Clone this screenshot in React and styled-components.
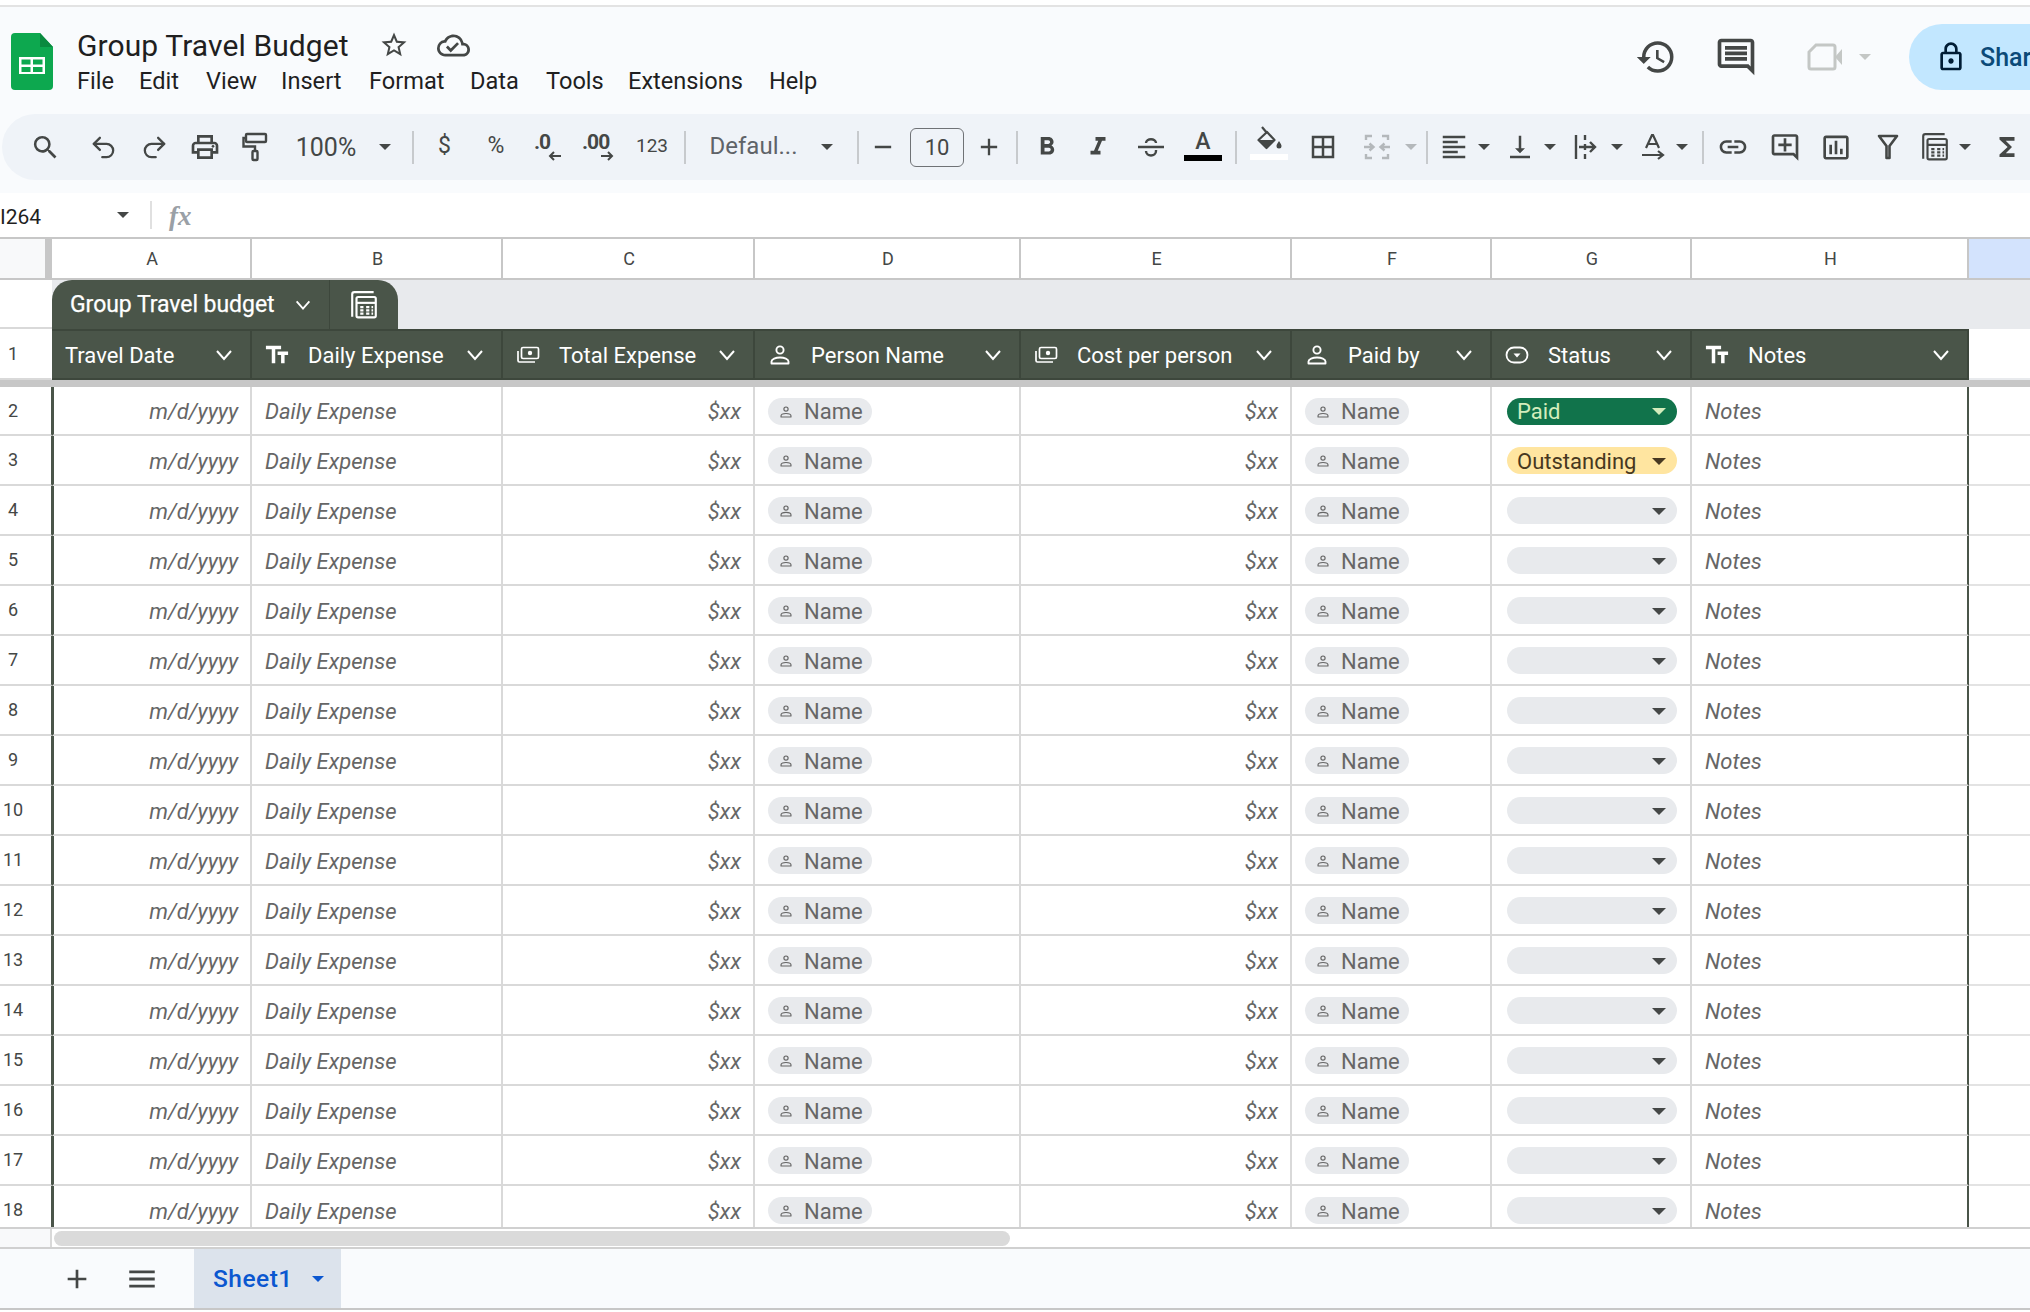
import React from 'react'
import styled, { createGlobalStyle } from 'styled-components'
import {
  MdSearch, MdOutlinePrint, MdFormatBold, MdFormatItalic,
  MdBorderAll, MdFormatAlignLeft, MdVerticalAlignBottom, MdLink, MdOutlineAddComment, MdInsertChartOutlined,
  MdFunctions, MdHistory, MdOutlineComment, MdOutlineLock, MdStarBorder, MdOutlineCloudDone, MdTextFields,
  MdAdd, MdRemove, MdMenu,
} from 'react-icons/md'
import { Undo2, Redo2 } from 'lucide-react'

const GRID = '52px 200px 251px 252px 266px 271px 200px 200px 277px 1fr'
const DARK = '#4a5549'
const INK = '#444746'

const GlobalStyle = createGlobalStyle`
  html, body { margin: 0; padding: 0; background: #fff; }
  * { box-sizing: border-box; }
  body { font-family: Roboto, "Liberation Sans", sans-serif; }
`

const Page = styled.div`
  width: 2030px;
  height: 1312px;
  overflow: hidden;
  display: flex;
  flex-direction: column;
  background: #fff;
  padding-top: 5px;
`

const Header = styled.header`
  height: 188px;
  background: #f9fbfd;
  border-top: 2px solid #e3e3e3;
  flex: none;
`
const TitleBar = styled.div`
  height: 107px;
  display: flex;
  align-items: flex-start;
`
const Logo = styled.svg`
  width: 42px;
  height: 57px;
  margin: 26px 24px 0 11px;
  flex: none;
`
const TitleBlock = styled.div`
  padding-top: 20px;
  display: flex;
  flex-direction: column;
`
const TitleLine = styled.div`
  height: 36px;
  display: flex;
  align-items: center;
  color: #1f1f1f;
`
const DocName = styled.span`
  font-size: 30px;
  letter-spacing: 0.1px;
  width: 302px;
`
const Menu = styled.nav`
  height: 36px;
  display: flex;
  align-items: center;
  font-size: 23.6px;
  color: #1f1f1f;
`
const MenuItem = styled.span`
  width: ${p => p.$w}px;
  flex: none;
`
const Actions = styled.div`
  margin-left: auto;
  margin-right: -40px;
  margin-top: 17px;
  height: 66px;
  display: flex;
  align-items: center;
  color: ${INK};
`
const ShareButton = styled.div`
  width: 161px;
  height: 66px;
  margin-left: 38px;
  border-radius: 33px;
  background: #c2e7ff;
  display: flex;
  align-items: center;
  padding-left: 26px;
  gap: 13px;
  font-size: 25px;
  font-weight: 500;
  color: #0b4a78;
  overflow: hidden;
  white-space: nowrap;
  svg { color: #001d35; flex: none; }
`
const CameraSlot = styled.span`
  margin-left: 49px;
  display: flex;
`
const CameraCaret = styled.span`
  margin-left: 16px;
`

const ToolbarPill = styled.div`
  height: 66px;
  margin-left: 2px;
  border-radius: 33px 0 0 33px;
  background: #eff3f8;
  display: flex;
  align-items: center;
  color: ${INK};
  overflow: hidden;
`
const ToolSlot = styled.div`
  width: ${p => p.$w}px;
  margin-left: ${p => p.$ml}px;
  flex: none;
  height: 40px;
  padding-bottom: ${p => p.$up || 0}px;
  display: flex;
  align-items: center;
  justify-content: center;
  position: relative;
  font-size: ${p => p.$fs || 22}px;
  color: ${p => p.$c || INK};
  white-space: nowrap;
`
const Sep = styled.div`
  width: 2px;
  height: 33px;
  background: #c7cacd;
`
const Caret = styled.i`
  display: block;
  width: 0;
  height: 0;
  border-left: ${p => p.$s || 6}px solid transparent;
  border-right: ${p => p.$s || 6}px solid transparent;
  border-top: ${p => p.$s || 6}px solid ${p => p.$c || INK};
  flex: none;
  ${p => p.$end && 'margin-left: auto;'}
`
const SizeBox = styled.div`
  width: 54px;
  height: 39px;
  border: 1.5px solid #6f7276;
  border-radius: 6px;
  display: flex;
  align-items: center;
  justify-content: center;
  font-size: 22px;
`
const ColorGlyph = styled.div`
  display: flex;
  flex-direction: column;
  align-items: center;
  width: 38px;
  height: 40px;
  padding-top: 2px;
  line-height: 26px;
  font-size: 23px;
  font-weight: 500;
`
const Swatch = styled.div`
  width: 38px;
  height: 6px;
  margin-top: ${p => p.$top || 0}px;
  background: ${p => p.$c};
  flex: none;
`
const DecimalGlyph = styled.div`
  display: flex;
  flex-direction: column;
  align-items: flex-end;
  width: 100%;
  font-size: 21px;
  font-weight: 700;
  line-height: 18px;
  letter-spacing: -1px;
  div { align-self: flex-start; }
`

const FormulaBar = styled.div`
  height: 46px;
  flex: none;
  display: flex;
  align-items: center;
  border-bottom: 2px solid #c7c7c7;
  color: #1f1f1f;
`
const CellName = styled.span`
  width: 117px;
  font-size: 21px;
  padding-top: 3px;
`
const FormulaSep = styled.div`
  width: 2px;
  height: 28px;
  background: #e0e0e0;
  margin: 0 17px 0 21px;
`
const Fx = styled.span`
  font-family: "Liberation Serif", serif;
  font-style: italic;
  font-size: 27px;
  color: #9aa0a6;
  font-weight: 700;
  padding-top: 2px;
`

const Row = styled.div`
  display: grid;
  grid-template-columns: ${GRID};
  flex: none;
`
const ColumnHeads = styled(Row)`
  height: 41px;
  border-bottom: 2px solid #c7c7c7;
`
const Corner = styled.div`
  background: #f8f9fa;
  border-right: 7px solid #c7c7c7;
`
const ColumnHead = styled.div`
  display: flex;
  align-items: center;
  justify-content: center;
  padding-left: 2px;
  font-size: 18px;
  color: ${INK};
  border-right: 2px solid #c7c7c7;
  background: ${p => (p.$selected ? '#d3e3fd' : '#fff')};
  ${p => p.$selected && 'border-right: 0;'}
`
const TableBand = styled.div`
  height: 49px;
  flex: none;
  display: flex;
  align-items: stretch;
  background: #e8eaed;
`
const BandGutter = styled.div`
  width: 52px;
  background: #fff;
  border-bottom: 2px solid #d9d9d9;
  flex: none;
`
const TableTab = styled.div`
  width: 346px;
  height: 49px;
  background: ${DARK};
  border-radius: 20px 20px 0 0;
  display: flex;
  color: #fff;
`
const TabTitle = styled.div`
  width: 278px;
  display: flex;
  align-items: center;
  padding-left: 18px;
  border-right: 1.5px solid #3d473c;
  font-size: 23px;
  letter-spacing: -0.05px;
  -webkit-text-stroke: 0.25px #fff;
  gap: 18px;
  white-space: nowrap;
  svg { flex: none; }
`
const TabIcon = styled.div`
  flex: 1;
  display: flex;
  align-items: center;
  justify-content: center;
`
const HeaderRow = styled(Row)`
  height: 51px;
`
const Gutter = styled.div`
  display: flex;
  align-items: center;
  padding-left: ${p => (p.$two ? 3 : 8)}px;
  font-size: 18px;
  color: ${INK};
  border-right: 1px solid ${p => (p.$data ? DARK : 'transparent')};
  border-bottom: 2px solid #d9d9d9;
  padding-bottom: 1px;
`
const HeaderCell = styled.div`
  display: flex;
  align-items: center;
  padding: 1px 15px 0 13px;
  background: ${DARK};
  color: #fff;
  font-size: 22px;
  border: 2px solid #3d473c;
  border-left-width: 0;
  span { margin-left: ${p => (p.$plain ? 0 : 19)}px; white-space: nowrap; }
  svg { flex: none; }
`
const TextIcon = styled.i`
  width: 24px;
  display: flex;
  justify-content: center;
  svg { margin: 0 -2px; }
`
const Chevron = styled.svg`
  margin-left: auto;
  width: 22px;
  height: 22px;
`
const HeaderRest = styled.div`
  background: #fff;
  border-bottom: 2px solid #e8eaed;
`
const FreezeBar = styled.div`
  height: 7px;
  background: #c7c7c7;
  flex: none;
`
const Body = styled.div`
  height: 840px;
  overflow: hidden;
  flex: none;
`
const DataRow = styled(Row)`
  height: 50px;
  &:first-child { height: 49px; }
`
const Cell = styled.div`
  display: flex;
  align-items: center;
  justify-content: ${p => (p.$right ? 'flex-end' : 'flex-start')};
  padding: 2px ${p => (p.$right ? 12 : 13)}px 0 13px;
  font-size: 22px;
  font-style: italic;
  color: #666;
  border-bottom: 2px solid #d9d9d9;
  border-right: 2px solid ${p => (p.$edge ? DARK : '#d9d9d9')};
  ${p => p.$first && `border-left: 2px solid ${DARK};`}
`
const RestCell = styled.div`
  border-bottom: 2px solid #e3e3e3;
`
const NameChip = styled.div`
  width: 104px;
  height: 27px;
  margin-top: -1px;
  border-radius: 14px;
  background: #e8eaed;
  display: flex;
  align-items: center;
  padding: 1px 0 0 11px;
  gap: 11px;
  font-size: 22px;
  font-style: normal;
  color: #666;
`
const Status = styled.div`
  width: 170px;
  height: 27px;
  margin: -1px 0 0 2px;
  border-radius: 14px;
  background: ${p => p.$bg};
  color: ${p => p.$fg};
  display: flex;
  align-items: center;
  padding: 1px 11px 0 10px;
  font-size: 22px;
  font-style: normal;
`

const ScrollStrip = styled.div`
  flex: none;
  display: flex;
  border-top: 2px solid #d0d0d0;
  border-bottom: 2px solid #d0d0d0;
  box-sizing: content-box;
  height: 18px;
`
const ScrollCorner = styled.div`
  width: 52px;
  background: #f8f9fa;
  border-right: 2px solid #d9d9d9;
`
const ScrollThumb = styled.div`
  width: 956px;
  height: 15px;
  margin: 2px 0 0 2px;
  background: #dadada;
  border-radius: 8px;
`
const SheetBar = styled.footer`
  height: 61px;
  flex: none;
  background: #f9fbfd;
  border-bottom: 2px solid #c7c7c7;
  display: flex;
  align-items: stretch;
  color: ${INK};
`
const SheetIcon = styled.div`
  width: ${p => p.$w}px;
  margin-left: ${p => p.$ml}px;
  display: flex;
  align-items: center;
  justify-content: center;
`
const SheetTab = styled.div`
  width: 147px;
  margin-left: 32px;
  background: #dce3ec;
  display: flex;
  align-items: center;
  padding-left: 19px;
  gap: 19px;
  color: #0b57d0;
  font-size: 24.5px;
  font-weight: 500;
  letter-spacing: 0.5px;
`

const Money = ({ size = 24 }) => (
  <svg width={size} height={size} viewBox="0 0 24 24" fill="none" stroke="currentColor" strokeWidth="1.7">
    <rect x="5.5" y="4.5" width="17" height="11" rx="1.5" />
    <circle cx="14" cy="10" r="2.2" fill="currentColor" stroke="none" />
    <path d="M2 8v9.5a1.5 1.5 0 0 0 1.5 1.5H19" />
  </svg>
)
const Person = ({ size = 24, sw = 1.9 }) => (
  <svg width={size} height={size} viewBox="0 0 24 24" fill="none" stroke="currentColor" strokeWidth={sw}>
    <circle cx="12" cy="7" r="3.6" />
    <path d="M3.5 20.5v-2c0-2.5 4.2-4 8.5-4s8.5 1.500 8.500 4v2z" strokeLinejoin="round" />
  </svg>
)
const Dropdown = ({ size = 24 }) => (
  <svg width={size} height={size} viewBox="0 0 24 24" fill="none" stroke="currentColor" strokeWidth="1.8">
    <rect x="1.500" y="4.500" width="21" height="15" rx="7.500" />
    <path d="M8.500 10.500h7L12 14.500z" fill="currentColor" stroke="none" />
  </svg>
)
const Calc = ({ size = 30 }) => (
  <svg width={size} height={size} viewBox="0 0 28 28" fill="none" stroke="currentColor" strokeWidth="2">
    <path d="M3 25V4a2 2 0 0 1 2-2h18" />
    <rect x="7" y="6.500" width="18" height="19" rx="1.500" />
    <path d="M7 12h18" />
    <path d="M10.500 16h3M16 16h3M21 16h1.500M10.500 19h3M16 19h3M21 19h1.500M10.500 22h3M16 22h3M21 22h1.500" />
  </svg>
)
const Roller = () => (
  <svg width="26" height="30" viewBox="0 0 26 30" fill="none" stroke="currentColor" strokeWidth="2.400">
    <rect x="4" y="2" width="20" height="8" rx="1" />
    <path d="M4 6H1.500v8.500H13V19" />
    <rect x="10.500" y="19" width="5" height="9" rx="1" />
  </svg>
)
const Merge = () => (
  <svg width="28" height="26" viewBox="0 0 28 26" fill="none" stroke="#b4b8bb" strokeWidth="2.400">
    <path d="M3 6V2h6M19 2h6v4M3 20v4h6M19 24h6v-4M1 13h9M6.500 9.500 10.500 13l-4 3.500M27 13h-9M21.500 9.500 17.500 13l4 3.500" />
  </svg>
)
const Wrap = () => (
  <svg width="24" height="26" viewBox="0 0 24 26" fill="none" stroke="currentColor" strokeWidth="2.400">
    <path d="M2 1v24M11 1v5M11 10v6M11 20v5M5 13h16M16 8l5 5-5 5" />
  </svg>
)
const Rotate = () => (
  <svg width="24" height="26" viewBox="0 0 24 26" fill="none" stroke="currentColor" strokeWidth="2.200">
    <path d="M5 14 11 1h1l6 13M7.500 10h9M1 21h20M17 17l5 4-5 4" />
  </svg>
)
const Funnel = () => (
  <svg width="22" height="26" viewBox="0 0 22 26" fill="none" stroke="currentColor" strokeWidth="2.600">
    <path d="M2 2h18l-7.500 10v12h-3V12z" strokeLinejoin="round" />
  </svg>
)
const Strike = () => (
  <svg width="28" height="24" viewBox="0 0 28 24" fill="none" stroke="currentColor" strokeWidth="2.400">
    <path d="M1 12h26M9 8c0-5 10-5 10 0M9 16c0 6 10 6 10 0v-1" />
  </svg>
)
const Bucket = () => (
  <svg width="28" height="26" viewBox="0 0 28 26" fill="none" stroke="currentColor" strokeWidth="2.200" style={{ marginTop: -3 }}>
    <path d="M7 1l5 6" />
    <path d="M12 6 3.500 14l8 8 8-8z" strokeLinejoin="round" />
    <path d="M3.500 14h16l-8 8z" fill="currentColor" stroke="none" />
    <path d="M24 15c1.700 2.500 2.500 3.600 2.500 5a2.500 2.500 0 0 1-5 0c0-1.400.8-2.500 2.500-5z" fill="currentColor" stroke="none" />
  </svg>
)
const Camera = () => (
  <svg width="36" height="28" viewBox="0 0 36 28" fill="none">
    <path d="M9 2h17a2 2 0 0 1 2 2v20a2 2 0 0 1-2 2H4a2 2 0 0 1-2-2V9z" stroke="#c4c7c5" strokeWidth="3" />
    <path d="M28 14l7-8v16z" fill="#c4c7c5" />
  </svg>
)
const Arrow = ({ dir }) => (
  <svg width="14" height="10" viewBox="0 0 14 10" fill="none" stroke="currentColor" strokeWidth="2">
    {dir === 'left' ? <path d="M13 5H2M6 1 2 5l4 4" /> : <path d="M1 5h11M8 1l4 4-4 4" />}
  </svg>
)
const ChevronDown = () => (
  <Chevron viewBox="0 0 22 22" fill="none" stroke="#fff" strokeWidth="2">
    <path d="M4 7l7 8 7-8" />
  </Chevron>
)

// each tool sits on its center x from the reference, gaps are worked out from that
const tools = [
  { c: 45.5, w: 36, el: <MdSearch size={31} /> },
  { c: 103, w: 30, el: <Undo2 size={29} strokeWidth={1.900} /> },
  { c: 154, w: 30, el: <Redo2 size={29} strokeWidth={1.900} /> },
  { c: 205, w: 34, el: <MdOutlinePrint size={32} /> },
  { c: 255, w: 30, el: <Roller /> },
  { c: 326, w: 64, fs: 25, el: '100%' },
  { c: 385, w: 14, el: <Caret /> },
  { c: 413, w: 2, el: <Sep /> },
  { c: 444.500, w: 20, fs: 23, up: 3, el: '$' },
  { c: 496, w: 24, fs: 23, up: 3, el: '%' },
  { c: 548, w: 28, el: <DecimalGlyph><div>.0</div><Arrow dir="left" /></DecimalGlyph> },
  { c: 598, w: 32, el: <DecimalGlyph><div>.00</div><Arrow dir="right" /></DecimalGlyph> },
  { c: 652, w: 32, fs: 19, up: 3, el: '123' },
  { c: 685, w: 2, el: <Sep /> },
  { c: 753.500, w: 92, fs: 24, up: 3, c2: '#5f6368', el: 'Defaul...' },
  { c: 827, w: 14, el: <Caret /> },
  { c: 858, w: 2, el: <Sep /> },
  { c: 883, w: 28, el: <MdRemove size={28} /> },
  { c: 937, w: 54, el: <SizeBox>10</SizeBox> },
  { c: 989, w: 28, el: <MdAdd size={30} /> },
  { c: 1016.500, w: 2, el: <Sep /> },
  { c: 1047, w: 30, el: <MdFormatBold size={34} /> },
  { c: 1098, w: 30, el: <MdFormatItalic size={34} /> },
  { c: 1150.500, w: 32, el: <Strike /> },
  { c: 1203, w: 38, el: <ColorGlyph>A<Swatch $c="#000" /></ColorGlyph> },
  { c: 1236, w: 2, el: <Sep /> },
  { c: 1269, w: 38, el: <ColorGlyph><Bucket /><Swatch $c="#fff" $top={2} /></ColorGlyph> },
  { c: 1322.500, w: 30, el: <MdBorderAll size={32} /> },
  { c: 1377, w: 30, el: <Merge /> },
  { c: 1411, w: 14, el: <Caret $c="#b4b8bb" /> },
  { c: 1427, w: 2, el: <Sep /> },
  { c: 1454, w: 30, el: <MdFormatAlignLeft size={32} /> },
  { c: 1484, w: 14, el: <Caret /> },
  { c: 1520, w: 30, el: <MdVerticalAlignBottom size={32} /> },
  { c: 1550, w: 14, el: <Caret /> },
  { c: 1586, w: 26, el: <Wrap /> },
  { c: 1617, w: 14, el: <Caret /> },
  { c: 1653, w: 26, el: <Rotate /> },
  { c: 1682, w: 14, el: <Caret /> },
  { c: 1702.500, w: 2, el: <Sep /> },
  { c: 1733, w: 32, el: <MdLink size={32} /> },
  { c: 1785, w: 32, el: <MdOutlineAddComment size={33} /> },
  { c: 1836, w: 32, el: <MdInsertChartOutlined size={33} /> },
  { c: 1888, w: 24, el: <Funnel /> },
  { c: 1934.500, w: 30, el: <Calc /> },
  { c: 1965, w: 14, el: <Caret /> },
  { c: 2006.500, w: 30, el: <MdFunctions size={32} /> },
]

const menu = [
  ['File', 62], ['Edit', 67], ['View', 75], ['Insert', 88], ['Format', 101],
  ['Data', 76], ['Tools', 82], ['Extensions', 141], ['Help', 60],
]

const columns = ['A', 'B', 'C', 'D', 'E', 'F', 'G', 'H']

const textIcon = <TextIcon><MdTextFields size={28} /></TextIcon>

const heads = [
  { label: 'Travel Date', plain: true },
  { label: 'Daily Expense', icon: textIcon },
  { label: 'Total Expense', icon: <Money /> },
  { label: 'Person Name', icon: <Person /> },
  { label: 'Cost per person', icon: <Money /> },
  { label: 'Paid by', icon: <Person /> },
  { label: 'Status', icon: <Dropdown /> },
  { label: 'Notes', icon: textIcon },
]

const rows = Array.from({ length: 17 }, (_, i) => i + 2)

const statusOf = {
  2: { label: 'Paid', bg: '#11734b', fg: '#d4edbc' },
  3: { label: 'Outstanding', bg: '#ffe5a0', fg: '#473821' },
}

function NameCell() {
  return (
    <Cell>
      <NameChip>
        <Person size={14} sw={2} />
        Name
      </NameChip>
    </Cell>
  )
}

function StatusCell({ row }) {
  const s = statusOf[row] || { label: '', bg: '#e8eaed', fg: INK }
  return (
    <Cell>
      <Status $bg={s.bg} $fg={s.fg}>
        {s.label}
        <Caret $c={s.fg} $s={7} $end />
      </Status>
    </Cell>
  )
}

export default function App() {
  let end = 2
  return (
    <Page>
      <GlobalStyle />
      <Header>
        <TitleBar>
          <Logo viewBox="0 0 42 57">
            <path d="M4 0h25l13 14v39a4 4 0 0 1-4 4H4a4 4 0 0 1-4-4V4a4 4 0 0 1 4-4z" fill="#0da84f" />
            <path d="M29 0l13 14H29z" fill="#0a8a3f" />
            <rect x="8" y="24" width="26" height="17" fill="#fff" />
            <rect x="10.500" y="26.500" width="9" height="5" fill="#0da84f" />
            <rect x="22" y="26.500" width="9.500" height="5" fill="#0da84f" />
            <rect x="10.500" y="34" width="9" height="5" fill="#0da84f" />
            <rect x="22" y="34" width="9.500" height="5" fill="#0da84f" />
          </Logo>
          <TitleBlock>
            <TitleLine>
              <DocName>Group Travel Budget</DocName>
              <MdStarBorder size={30} color={INK} />
              <MdOutlineCloudDone size={33} color={INK} style={{ marginLeft: 28 }} />
            </TitleLine>
            <Menu>
              {menu.map(([label, w]) => (
                <MenuItem key={label} $w={w}>{label}</MenuItem>
              ))}
            </Menu>
          </TitleBlock>
          <Actions>
            <MdHistory size={42} />
            <MdOutlineComment size={44} style={{ marginLeft: 37 }} />
            <CameraSlot><Camera /></CameraSlot>
            <CameraCaret><Caret $c="#c4c7c5" $s={6} /></CameraCaret>
            <ShareButton>
              <MdOutlineLock size={32} />
              Share
            </ShareButton>
          </Actions>
        </TitleBar>
        <ToolbarPill>
          {tools.map((t, i) => {
            const ml = t.c - t.w / 2 - end
            end = t.c + t.w / 2
            return (
              <ToolSlot key={i} $w={t.w} $ml={ml} $fs={t.fs} $c={t.c2} $up={t.up}>
                {t.el}
              </ToolSlot>
            )
          })}
        </ToolbarPill>
      </Header>
      <FormulaBar>
        <CellName>I264</CellName>
        <Caret />
        <FormulaSep />
        <Fx>fx</Fx>
      </FormulaBar>
      <ColumnHeads>
        <Corner />
        {columns.map(c => <ColumnHead key={c}>{c}</ColumnHead>)}
        <ColumnHead $selected />
      </ColumnHeads>
      <TableBand>
        <BandGutter />
        <TableTab>
          <TabTitle>
            Group Travel budget
            <svg width="20" height="20" viewBox="0 0 22 22" fill="none" stroke="#fff" strokeWidth="2"><path d="M4 7l7 8 7-8" /></svg>
          </TabTitle>
          <TabIcon><Calc /></TabIcon>
        </TableTab>
      </TableBand>
      <HeaderRow>
        <Gutter>1</Gutter>
        {heads.map(h => (
          <HeaderCell key={h.label} $plain={h.plain}>
            {h.icon}
            <span>{h.label}</span>
            <ChevronDown />
          </HeaderCell>
        ))}
        <HeaderRest />
      </HeaderRow>
      <FreezeBar />
      <Body>
        {rows.map(r => (
          <DataRow key={r}>
            <Gutter $data $two={r > 9}>{r}</Gutter>
            <Cell $right $first>m/d/yyyy</Cell>
            <Cell>Daily Expense</Cell>
            <Cell $right>$xx</Cell>
            <NameCell />
            <Cell $right>$xx</Cell>
            <NameCell />
            <StatusCell row={r} />
            <Cell $edge>Notes</Cell>
            <RestCell />
          </DataRow>
        ))}
      </Body>
      <ScrollStrip>
        <ScrollCorner />
        <ScrollThumb />
      </ScrollStrip>
      <SheetBar>
        <SheetIcon $w={40} $ml={57}><MdAdd size={32} /></SheetIcon>
        <SheetIcon $w={40} $ml={25}><MdMenu size={34} /></SheetIcon>
        <SheetTab>
          Sheet1
          <Caret $c="#0b57d0" />
        </SheetTab>
      </SheetBar>
    </Page>
  )
}
